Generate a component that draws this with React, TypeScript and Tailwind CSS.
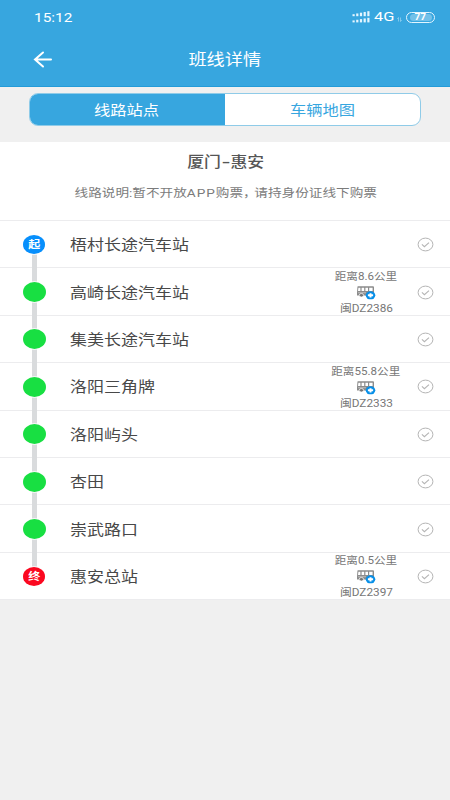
import React from 'react';

type Stop = { name: string; kind?: 'start' | 'end'; distance?: string; plate?: string };

const stops: Stop[] = [
  { name: '梧村长途汽车站', kind: 'start' },
  { name: '高崎长途汽车站', distance: '距离8.6公里', plate: '闽DZ2386' },
  { name: '集美长途汽车站' },
  { name: '洛阳三角牌', distance: '距离55.8公里', plate: '闽DZ2333' },
  { name: '洛阳屿头' },
  { name: '杏田' },
  { name: '崇武路口' },
  { name: '惠安总站', kind: 'end', distance: '距离0.5公里', plate: '闽DZ2397' },
];

function Signal() {
  const bars = [0, 1, 2, 3, 4];
  return (
    <svg className="block" width="18" height="12" viewBox="0 0 18 12" fill="#e4f6ff">
      {bars.map((i) => (
        <g key={i}>
          <rect x={0.5 + i * 3.7} y={3.2 - i * 0.75} width="2.2" height={2 + i * 0.75} />
          <rect x={0.5 + i * 3.7} y={9.4 - i * 0.65} width="2.2" height={2 + i * 0.65} />
        </g>
      ))}
    </svg>
  );
}

function Bus() {
  return (
    <svg className="block" width="20" height="15" viewBox="0 0 20 15" fill="none">
      <path d="M2.2 1.3h14.6c.7 0 1.2.5 1.2 1.2v8H1V7.7l.4-5.2c0-.7.2-1.2.8-1.2Z" fill="#8b8b8b" />
      <path d="M2.4 2.7h2v3.2H2ZM5.6 2.7h2.6v3.2H5.6ZM9.4 2.7H12v3.2H9.4ZM13.2 2.7h3.4v3.2h-3.4Z" fill="#fff" />
      <path d="M2 7.7h8" stroke="#c5c5c5" strokeWidth=".8" />
      <ellipse cx="5.4" cy="10.3" rx="2.2" ry="1.8" fill="#777" stroke="#fff" strokeWidth=".7" />
      <ellipse cx="14.5" cy="10.3" rx="4.8" ry="4" fill="#078fe8" />
      <path d="M11.9 10.3h5.2M14.5 8.2v4.2" stroke="#fff" strokeWidth="2" />
    </svg>
  );
}

function Check() {
  return (
    <svg className="block" width="17" height="15" viewBox="0 0 17 15" fill="none" stroke="#b5b5b5">
      <ellipse cx="8.5" cy="7.5" rx="7.4" ry="6.4" />
      <path d="m4.9 7.4 2.5 2.3 4.6-4" strokeWidth="1.1" />
    </svg>
  );
}

function Marker({ kind }: { kind?: 'start' | 'end' }) {
  if (!kind) return <div className="relative h-5 w-[23px] rounded-[50%] bg-[#18df42] ring-1 ring-white/70" />;
  return (
    <div className={`relative flex h-[19px] w-[22px] items-center justify-center rounded-[50%] pt-[2px] text-[10.5px] leading-none font-bold text-white ring-1 ring-white/70 ${kind === 'start' ? 'bg-[#078ffc]' : 'bg-[#fb0820]'}`}>
      <span className="inline-block scale-x-[1.15]">{kind === 'start' ? '起' : '终'}</span>
    </div>
  );
}

function Row({ stop, last }: { stop: Stop; last: boolean }) {
  return (
    <div className="flex h-[47.4px] border-b border-[#ececee]">
      <div className="relative ml-[22px] flex w-6 shrink-0 items-center justify-center pt-px">
        <div className={`absolute left-[10px] w-[4.5px] bg-[#d9dbdd] ${stop.kind === 'start' ? 'top-1/2 -bottom-px' : last ? 'top-0 bottom-1/2' : 'top-0 -bottom-px'}`} />
        <Marker kind={stop.kind} />
      </div>
      <div className="ml-[23.5px] flex flex-1 items-center pt-[4px] text-[14.4px] leading-5 text-[#484848]">
        <span className="inline-block origin-left scale-x-[1.18] whitespace-nowrap">{stop.name}</span>
      </div>
      <div className="flex w-[90px] shrink-0 flex-col items-center justify-center pt-[2px] text-[10px] leading-[13px] text-[#777]">
        {stop.distance && (
          <>
            <span className="inline-block scale-x-[1.16] whitespace-nowrap">{stop.distance}</span>
            <div className="my-[2px]"><Bus /></div>
            <span className="inline-block scale-x-[1.18] whitespace-nowrap">{stop.plate}</span>
          </>
        )}
      </div>
      <div className="mr-4 ml-[6px] flex items-center pt-px"><Check /></div>
    </div>
  );
}

export default function App() {
  return (
    <div className="h-[800px] w-[450px] overflow-hidden bg-[#f0f0f0] font-[Roboto,'Noto_Sans_CJK_SC',sans-serif]">
      <header className="h-[87px] border-b border-[#239bd8] bg-[#37a6df] text-white">
        <div className="flex h-[34px] items-center pr-[15px] pl-[34px]">
          <span className="inline-block origin-left scale-x-[1.14] text-[13.5px] leading-4">15:12</span>
          <div className="ml-auto flex items-center">
            <Signal />
            <span className="ml-[4px] w-[22px] text-[13px] leading-4"><span className="inline-block origin-left scale-x-[1.26]">4G</span></span>
            <svg className="mt-1 mr-1 ml-px block" width="5" height="5" viewBox="0 0 5 5" stroke="#9dd5f2" strokeWidth=".7" fill="none"><path d="M1.5 4.5v-4L.3 2M3.5.5v4L4.7 3" /></svg>
            <div className="flex h-[11px] w-[29px] items-center justify-center rounded-full border border-[#e3f5ff] p-px">
              <div className="flex h-[7px] w-[22px] items-center justify-center rounded-full bg-[#73c1e9] text-[9px] leading-none font-bold"><span className="inline-block scale-x-[1.12]">77</span></div>
            </div>
          </div>
        </div>
        <div className="grid h-[51px] grid-cols-3 items-center">
          <svg className="ml-[33px] block" width="20" height="17" viewBox="0 0 20 17" fill="none" stroke="white" strokeWidth="2" strokeLinecap="round"><path d="M10 1.5 2 8.5l8 7M2 8.5h16" /></svg>
          <div className="text-center text-[15.4px] leading-5"><span className="inline-block scale-x-[1.18] whitespace-nowrap">班线详情</span></div>
        </div>
      </header>
      <div className="flex h-[55px] px-[29px] pt-[6px]">
        <div className="flex h-[33px] w-full overflow-hidden rounded-[9px] border border-[#8fcbe8] bg-white text-[13.8px] leading-5">
          <div className="flex w-1/2 items-center justify-center bg-[#37a6df] pt-px pr-[2px] text-white"><span className="inline-block scale-x-[1.18]">线路站点</span></div>
          <div className="flex w-1/2 items-center justify-center pt-px text-[#37a6df]"><span className="inline-block scale-x-[1.18]">车辆地图</span></div>
        </div>
      </div>
      <main className="bg-white">
        <div className="flex h-[79px] flex-col items-center border-b border-[#ececee] pt-[10px]">
          <h1 className="flex scale-x-[1.18] items-center pl-px text-[14.3px] leading-5 font-medium whitespace-nowrap text-[#555]">
            <span>厦门</span><span className="inline-block w-[8px] scale-x-[1.5] text-center">-</span><span>惠安</span>
          </h1>
          <p className="mt-[13px] scale-x-[1.175] pl-px text-[11.6px] leading-4 whitespace-nowrap text-[#7b7b7b]">线路说明:暂不开放<span className="tracking-[0.8px]">APP</span>购票<span className="tracking-[-2px]">，</span>请持身份证线下购票</p>
        </div>
        {stops.map((stop, i) => <Row key={stop.name} stop={stop} last={i === stops.length - 1} />)}
      </main>
    </div>
  );
}
